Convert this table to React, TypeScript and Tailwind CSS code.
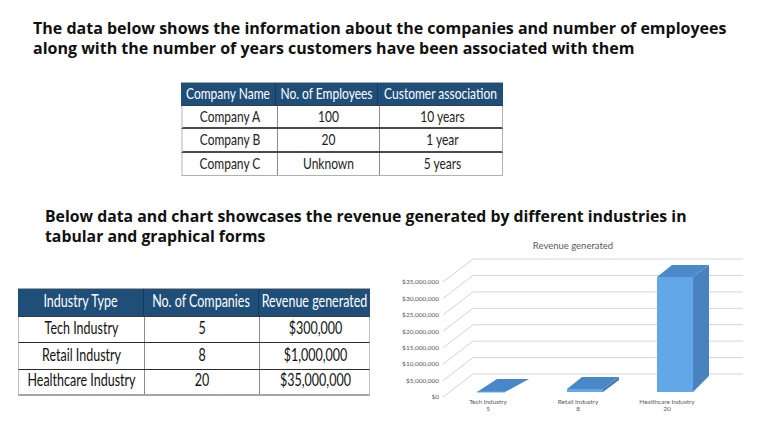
import React from "react";

const t1 = [
  ["Company A", "100", "10 years"],
  ["Company B", "20", "1 year"],
  ["Company C", "Unknown", "5 years"],
];
const t2 = [
  ["Tech Industry", "5", "$300,000"],
  ["Retail Industry", "8", "$1,000,000"],
  ["Healthcare Industry", "20", "$35,000,000"],
];

function Chart() {
  const backs = [373, 356.6, 340.1, 323.7, 307.3, 290.9, 274.4, 258];
  const labels = ["$0", "$5,000,000", "$10,000,000", "$15,000,000", "$20,000,000", "$25,000,000", "$30,000,000", "$35,000,000"];
  const ff = "Lato, sans-serif";
  return (
    <svg width={378} height={180} viewBox="390 236 378 180" className="ml-[20px] -mt-[9px] shrink-0">
      <text x={573} y={248} textAnchor="middle" fontSize={9.5} fill="#595959" fontFamily={ff}>Revenue generated</text>
      {backs.map((y, i) => (
        <g key={i}>
          <line x1={443} y1={y + 23} x2={473} y2={y} stroke="#d4d4d4" strokeWidth={1} />
          <line x1={473} y1={y} x2={743} y2={y} stroke="#d4d4d4" strokeWidth={1} />
          <text x={439} y={y + 25.2} textAnchor="end" fontSize={6.5} fill="#595959" fontFamily={ff}>{labels[i]}</text>
        </g>
      ))}
      <polygon points="477,391 505,391 529,378 497,378" fill="#4a87c8" />
      <line x1={477} y1={391} x2={505} y2={391} stroke="#62a8e8" strokeWidth={1} />
      <polygon points="567,388 603,388 619,376 582,376" fill="#4a87c8" />
      <rect x={567} y={388} width={36} height={3} fill="#62a8e8" />
      <polygon points="603,388 619,376 619,379 603,391" fill="#4479b6" />
      <rect x={657} y={276} width={36} height={115} fill="#62a8e8" />
      <polygon points="657,276 693,276 709,264 672,264" fill="#4b89ca" />
      <polygon points="693,276 709,264 709,375 693,391" fill="#4a82bf" />
      {[
        [488, "Tech Industry", "5"],
        [578, "Retail Industry", "8"],
        [667, "Healthcare Industry", "20"],
      ].map(([x, a, b]) => (
        <g key={a as string}>
          <text x={x as number} y={403} textAnchor="middle" fontSize={6.4} fill="#595959" fontFamily={ff}>{a}</text>
          <text x={x as number} y={410} textAnchor="middle" fontSize={6.4} fill="#595959" fontFamily={ff}>{b}</text>
        </g>
      ))}
    </svg>
  );
}

function C1({ children, last }: { children: React.ReactNode; last?: boolean }) {
  return (
    <div className={`flex items-center justify-center whitespace-nowrap ${last ? "" : "border-r border-[#8c8c8c]"}`}>
      <span className="inline-block scale-y-[1.25]">{children}</span>
    </div>
  );
}
function H1({ children, last }: { children: React.ReactNode; last?: boolean }) {
  return (
    <div className={`flex items-center justify-center whitespace-nowrap ${last ? "" : "border-r border-[#17375e]"}`}>
      <span className="inline-block scale-y-[1.25]">{children}</span>
    </div>
  );
}
function C2({ children, last }: { children: React.ReactNode; last?: boolean }) {
  return (
    <div className={`flex items-center justify-center whitespace-nowrap ${last ? "" : "border-r border-[#8c8c8c]"}`}>
      <span className="inline-block scale-y-[1.35]">{children}</span>
    </div>
  );
}
function H2({ children, last }: { children: React.ReactNode; last?: boolean }) {
  return (
    <div className={`flex items-center justify-center whitespace-nowrap ${last ? "" : "border-r border-[#17375e]"}`}>
      <span className="inline-block scale-y-[1.35]">{children}</span>
    </div>
  );
}

export default function App() {
  return (
    <div className="w-[768px] h-[433px] bg-white overflow-hidden font-['Lato',sans-serif] text-[#111]">
      <h1 className="pt-[17.5px] pl-[33px] font-['Open_Sans',sans-serif] text-[16px] leading-[20px] font-bold">
        The data below shows the information about the companies and number of employees
        <br />
        along with the number of years customers have been associated with them
      </h1>

      <div className="ml-[181px] mt-[24.5px] w-[322px] border-t border-[#a6a6a6] text-[12px] text-[#222]">
        <div className="grid grid-cols-[95px_102px_125px] h-[23px] bg-[#1f4e79] text-white border-b border-[#3a3a3a]">
          <H1>Company Name</H1>
          <H1>No. of Employees</H1>
          <H1 last>Customer association</H1>
        </div>
        {t1.map((r, i) => (
          <div
            key={i}
            className={`grid grid-cols-[95px_102px_125px] h-[23.3px] border-l-2 border-l-[#d9d9d9] border-r border-r-[#b0b0b0] ${
              i < 2 ? "border-b-2 border-b-[#4a4a4a]" : "border-b border-b-[#b0b0b0]"
            }`}
          >
            <C1>{r[0]}</C1>
            <C1>{r[1]}</C1>
            <C1 last>{r[2]}</C1>
          </div>
        ))}
      </div>

      <h2 className="mt-[30px] pl-[45px] font-['Open_Sans',sans-serif] text-[15.8px] leading-[20px] font-bold">
        Below data and chart showcases the revenue generated by different industries in
        <br />
        tabular and graphical forms
      </h2>

      <div className="flex items-start">
        <div className="ml-[18px] mt-[42px] w-[352px] border-t border-[#a6a6a6] text-[12.5px]">
          <div className="grid grid-cols-[126px_115px_111px] h-[28px] bg-[#1f4e79] text-white border-b border-[#3a3a3a]">
            <H2>Industry Type</H2>
            <H2>No. of Companies</H2>
            <H2 last>Revenue generated</H2>
          </div>
          {t2.map((r, i) => (
            <div
              key={i}
              className={`grid grid-cols-[126px_115px_111px] h-[26.4px] border-l border-l-[#bfbfbf] border-r border-r-[#bfbfbf] ${
                i < 2 ? "border-b-[1.5px] border-b-[#2a2a2a]" : "border-b-2 border-b-[#a6a6a6]"
              }`}
            >
              <C2>{r[0]}</C2>
              <C2>{r[1]}</C2>
              <C2 last>{r[2]}</C2>
            </div>
          ))}
        </div>
        <Chart />
      </div>
    </div>
  );
}
